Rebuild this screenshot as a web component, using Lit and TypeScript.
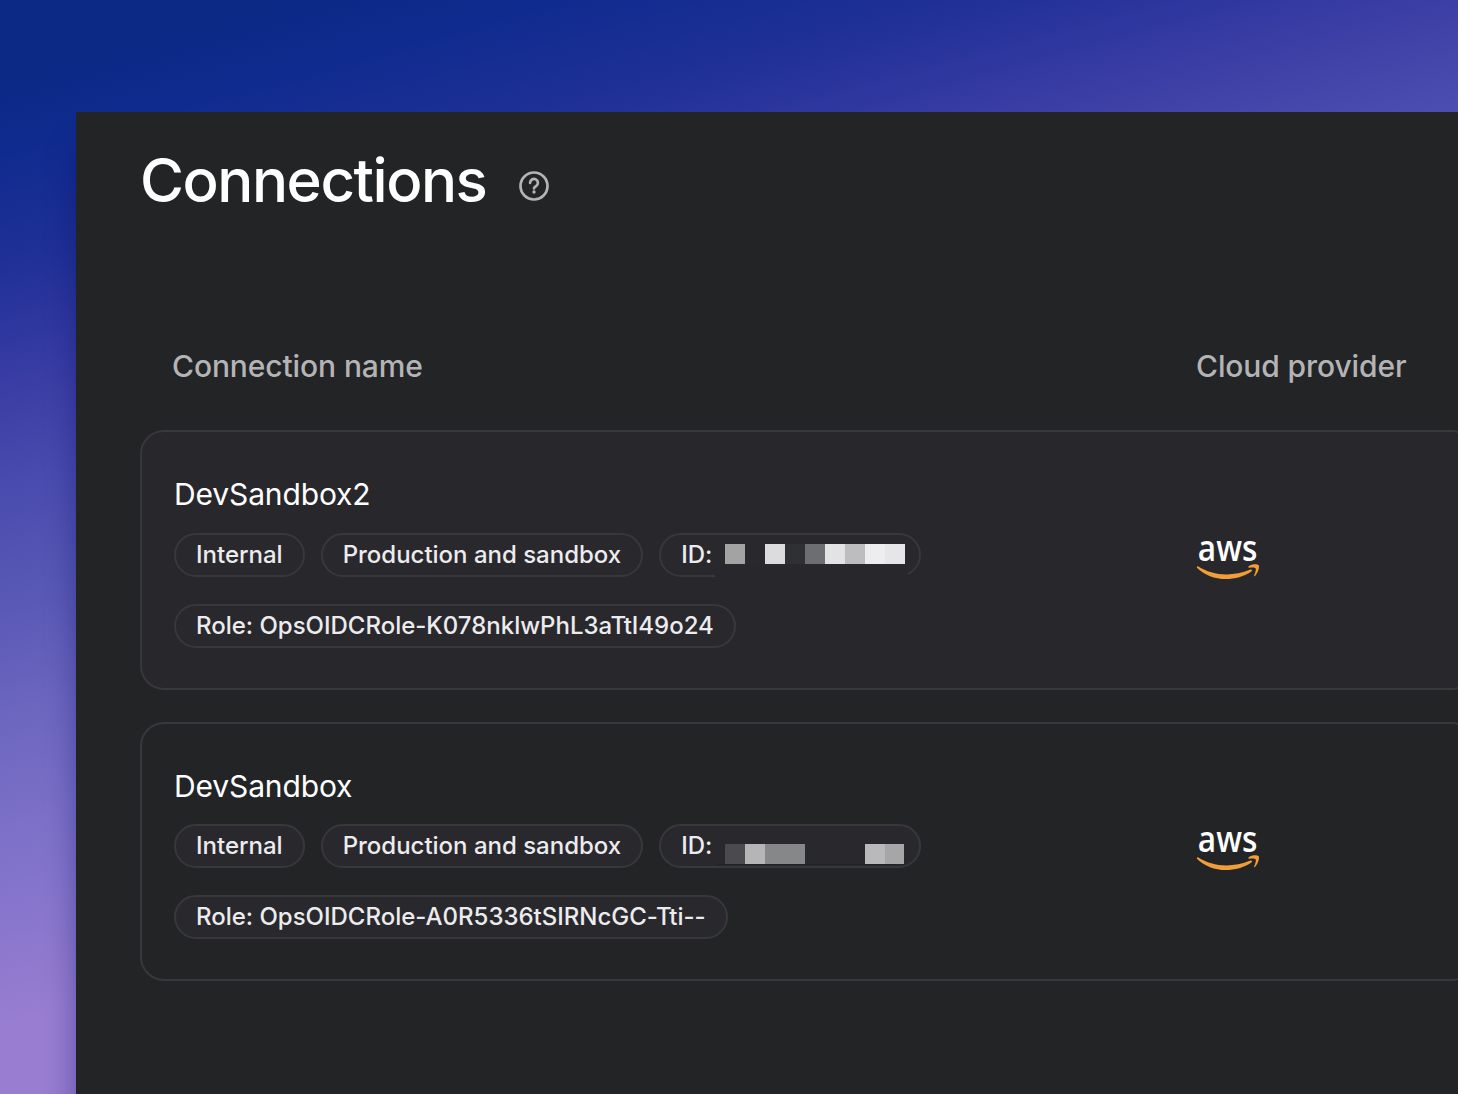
import { LitElement, html, css, svg } from "lit";
import { customElement, property } from "lit/decorators.js";

interface Block { x: number; y: number; w: number; h: number; fill: string }
interface Connection { name: string; role: string; cls: string; mask: Block[] }

const connections: Connection[] = [
  {
    name: "DevSandbox2",
    role: "OpsOIDCRole-K078nklwPhL3aTtI49o24",
    cls: "first",
    mask: [
      { x: 0, y: 32, w: 193, h: 14, fill: "#28272c" },
      { x: 10, y: 10, w: 20, h: 20, fill: "#a3a3a4" },
      { x: 50, y: 10, w: 20, h: 20, fill: "#dcdcde" },
      { x: 70, y: 10, w: 20, h: 20, fill: "#2f3034" },
      { x: 90, y: 10, w: 20, h: 20, fill: "#6d6e71" },
      { x: 110, y: 10, w: 20, h: 20, fill: "#e3e3e5" },
      { x: 130, y: 10, w: 20, h: 20, fill: "#bdbdbf" },
      { x: 150, y: 10, w: 20, h: 20, fill: "#ededef" },
      { x: 170, y: 10, w: 20, h: 20, fill: "#e6e6e8" },
    ],
  },
  {
    name: "DevSandbox",
    role: "OpsOIDCRole-A0R5336tSIRNcGC-Tti--",
    cls: "second",
    mask: [
      { x: 0, y: 39, w: 189, h: 1, fill: "#232426" },
      { x: 10, y: 19, w: 20, h: 20, fill: "#4b4b4f" },
      { x: 30, y: 19, w: 20, h: 20, fill: "#b5b5b7" },
      { x: 50, y: 19, w: 40, h: 20, fill: "#868789" },
      { x: 150, y: 19, w: 20, h: 20, fill: "#b9b9bb" },
      { x: 170, y: 19, w: 19, h: 20, fill: "#a6a6a8" },
    ],
  },
];

@customElement("tag-chip")
class TagChip extends LitElement {
  static styles = css`
    :host {
      display: flex;
      align-items: center;
      box-sizing: border-box;
      height: 44px;
      padding: 0 20px;
      border: 2px solid #38383c;
      border-radius: 22px;
      background: #29282d;
      color: #ececee;
      font: 500 24px/40px Inter, sans-serif;
      letter-spacing: -0.01px;
      white-space: nowrap;
    }
  `;
  render() {
    return html`<slot></slot>`;
  }
}

@customElement("aws-logo")
class AwsLogo extends LitElement {
  static styles = css`
    :host { display: block; width: 66px; height: 46px; }
    .logo { display: block; overflow: visible; }
    .word { font: 600 36px "Open Sans", sans-serif; fill: #fff; }
  `;
  render() {
    return html`<svg class="logo" width="66" height="46" viewBox="0 0 66 46">
      <text class="word" x="1.800" y="26.600" textLength="59.500" lengthAdjust="spacingAndGlyphs">aws</text>
      <g fill="#f19e38" transform="translate(0 2.600)">
        <path d="M2.300 29.800C10 34.600 20 37.800 30.500 37.800c7.500 0 16-1.500 23.800-4.800 1.400-.6 2.500.9 1.100 1.900C48.500 39.900 38.500 42.500 30 42.500 18.500 42.500 8.500 38.300 1.200 31.400c-.9-.8-.1-2 1.100-1.600z"/>
        <path d="M52.700 29.600c3-2.100 8-2.400 9.800-1.100 1.500 1.300-.3 7.800-3.600 11-.6.500-1.200.2-.9-.4.900-2.100 2.400-6 1.700-7.300-.7-1.100-4.500-.9-6.500-.6-.8.100-1.100-1-.5-1.600z"/>
      </g>
    </svg>`;
  }
}

@customElement("connection-card")
class ConnectionCard extends LitElement {
  @property({ attribute: false }) connection!: Connection;
  static styles = css`
    :host { display: block; }
    .card {
      box-sizing: border-box;
      display: grid;
      grid-template-columns: 1022px 1fr;
      height: 260px;
      border: 2px solid #38383c;
      border-radius: 24px;
      padding: 42px 32px 0;
    }
    .first { background: #28272c; }
    .second { height: 259px; }
    .name {
      color: #fff;
      font: 400 30px/40px Inter, sans-serif;
      letter-spacing: -0.13px;
    }
    .chips { display: flex; gap: 16px; margin-top: 19px; }
    .second .chips { margin-top: 18px; }
    .second .chips + .chips, .chips + .chips { margin-top: 27px; }
    .id { position: relative; width: 262px; }
    .mask { position: absolute; left: 54px; top: -1px; overflow: visible; }
    .logo { margin-top: 60px; }
    .second .logo { margin-top: 59px; }
  `;
  render() {
    const c = this.connection;
    return html`<div class="card ${c.cls}">
      <div>
        <div class="name">${c.name}</div>
        <div class="chips">
          <tag-chip>Internal</tag-chip>
          <tag-chip>Production and sandbox</tag-chip>
          <tag-chip class="id">ID:
            <svg class="mask" width="192" height="44" shape-rendering="crispEdges">
              ${c.mask.map((b) => svg`<rect x=${b.x} y=${b.y} width=${b.w} height=${b.h} fill=${b.fill} />`)}
            </svg>
          </tag-chip>
        </div>
        <div class="chips"><tag-chip>Role: ${c.role}</tag-chip></div>
      </div>
      <aws-logo class="logo"></aws-logo>
    </div>`;
  }
}

@customElement("app-root")
class AppRoot extends LitElement {
  static styles = css`
    :host {
      display: block;
      box-sizing: border-box;
      height: 1094px;
      overflow: hidden;
      padding: 112px 0 0 76px;
      background: linear-gradient(164.7deg, #0b2985 75px, #102b8f 150px, #1f3096 255px, #3038a0 330px, #3e40a6 395px, #494bae 470px, #5858b5 580px, #6c66bf 690px, #7c70c8 800px, #8a77cd 900px, #987dd0 990px);
    }
    .panel {
      box-sizing: border-box;
      width: 1400px;
      height: 982px;
      padding: 32px 0 0 64px;
      background: #232426;
      box-shadow: 0 36px 28px rgba(0, 16, 100, 0.4);
    }
    .heading { display: flex; align-items: center; gap: 32px; height: 72px; }
    .title { margin: 0; color: #fff; font: 500 60px/72px Inter, sans-serif; letter-spacing: -1.46px; }
    .help { display: block; margin-top: 12px; }
    .columns {
      display: grid;
      grid-template-columns: 1024px 1fr;
      margin: 130px 0 44px;
      padding-left: 32px;
      color: #b4b4b6;
      font: 500 30px/40px Inter, sans-serif;
      letter-spacing: -0.11px;
    }
    .rows { display: flex; flex-direction: column; gap: 32px; }
  `;
  render() {
    return html`<main class="panel">
      <div class="heading">
        <h1 class="title">Connections</h1>
        <svg class="help" width="32" height="32" viewBox="0 0 32 32" fill="none" stroke="#b4b4b6" stroke-width="2.700" stroke-linecap="round" stroke-linejoin="round">
          <circle cx="16" cy="16" r="13.500"/>
          <path d="M12.100 12.900a3.900 3.900 0 1 1 6 3.200c-1.300.9-2.100 1.300-2.100 2.400"/>
          <circle cx="16" cy="22" r="1.700" fill="#b4b4b6" stroke="none"/>
        </svg>
      </div>
      <div class="columns"><span>Connection name</span><span>Cloud provider</span></div>
      <div class="rows">
        ${connections.map((c) => html`<connection-card .connection=${c}></connection-card>`)}
      </div>
    </main>`;
  }
}
